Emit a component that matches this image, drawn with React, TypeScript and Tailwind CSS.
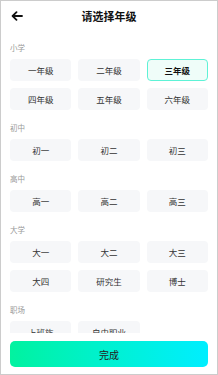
import React, { useState } from 'react';

const sections: { title: string; items: string[] }[] = [
  { title: '小学', items: ['一年级', '二年级', '三年级', '四年级', '五年级', '六年级'] },
  { title: '初中', items: ['初一', '初二', '初三'] },
  { title: '高中', items: ['高一', '高二', '高三'] },
  { title: '大学', items: ['大一', '大二', '大三', '大四', '研究生', '博士'] },
  { title: '职场', items: ['上班族', '自由职业'] },
];

export default function App() {
  const [selected, setSelected] = useState('三年级');

  return (
    <div
      className="flex h-[375px] w-[218px] flex-col overflow-hidden border border-[#cccccc] bg-white"
      style={{ fontFamily: '"Noto Sans CJK SC", "Noto Sans", sans-serif' }}
    >
      {/* header */}
      <div className="relative flex h-[31px] shrink-0 items-center justify-center">
        <button className="absolute left-[10px] top-[10px] text-[#111]">
          <svg width="12" height="10" viewBox="0 0 12 10" fill="none">
            <path d="M11 5H2M5.5 1.2L1.6 5l3.9 3.8" stroke="currentColor" strokeWidth="1.8" strokeLinecap="round" strokeLinejoin="round" />
          </svg>
        </button>
        <h1 className="text-[11px] font-bold leading-none text-[#111]">请选择年级</h1>
      </div>

      {/* list */}
      <div className="flex-1 overflow-hidden px-[9px] pt-[11px]">
        {sections.map((s) => (
          <div key={s.title} className="mb-[13px]">
            <div className="mb-[6px] h-[10px] text-[7.5px] leading-[10px] text-[#999]">{s.title}</div>
            <div className="grid grid-cols-3 gap-[7px]">
              {s.items.map((item) => {
                const active = item === selected;
                return (
                  <button
                    key={item}
                    onClick={() => setSelected(item)}
                    className={
                      active
                        ? 'h-[22px] rounded-[4px] border border-[#5ef2d6] bg-[#effdf9] text-[8.5px] font-bold text-[#111]'
                        : 'h-[22px] rounded-[4px] border border-transparent bg-[#f6f7f9] text-[8.5px] text-[#333]'
                    }
                  >
                    {item}
                  </button>
                );
              })}
            </div>
          </div>
        ))}
      </div>

      {/* footer */}
      <div className="shrink-0 bg-white px-[9px] pb-[7px] pt-[8px]">
        <button className="flex h-[26px] w-full items-center justify-center rounded-[5px] bg-gradient-to-r from-[#03f29f] to-[#00eeff] text-[10px] text-[#222]">
          完成
        </button>
      </div>
    </div>
  );
}
